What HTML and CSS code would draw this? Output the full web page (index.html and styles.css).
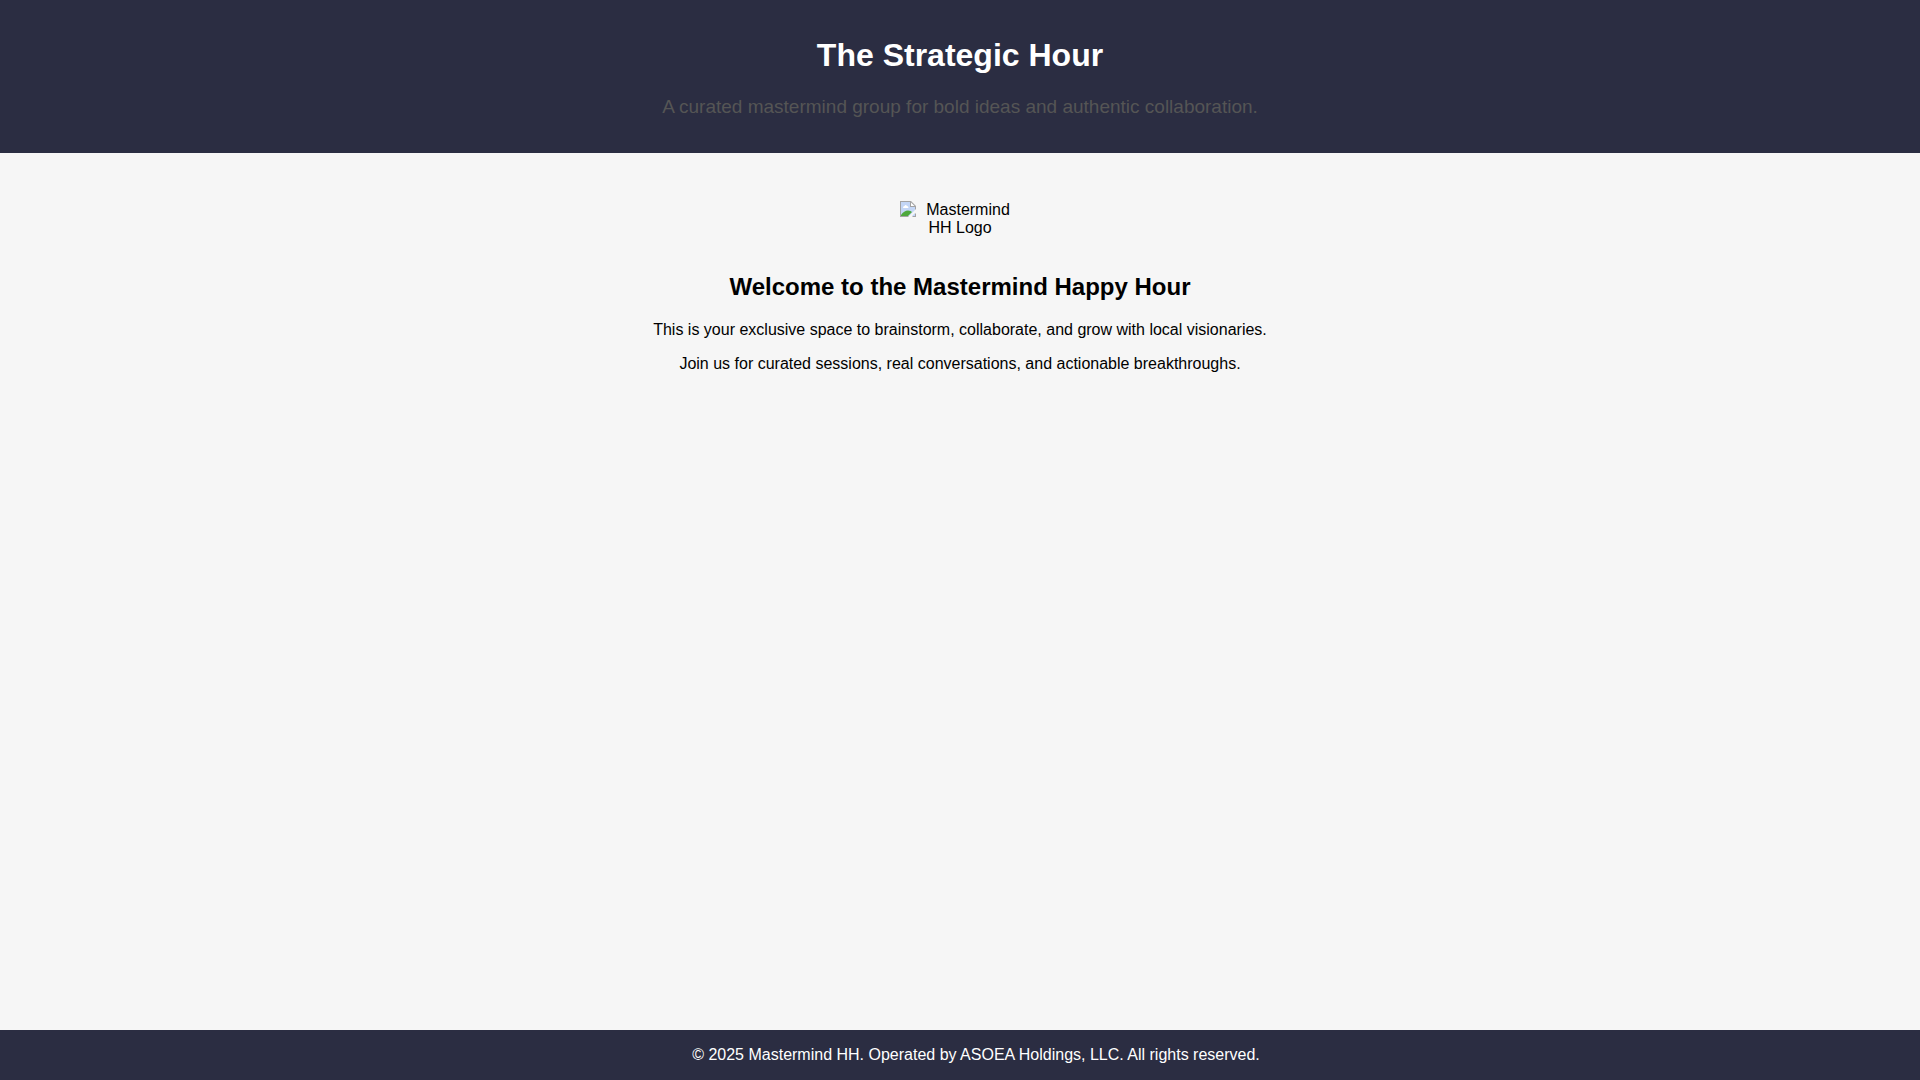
FILE: index.html
```html
<!DOCTYPE html>
<html lang="en">
<head>
<meta charset="utf-8">
<title>The Strategic Hour</title>
<link rel="stylesheet" href="styles.css">
</head>
<body class="page">
<header class="site-header">
<h1 class="site-title">The Strategic Hour</h1>
<p class="tagline">A curated mastermind group for bold ideas and authentic collaboration.</p>
</header>
<main class="content">
<div class="logo">
<svg class="logo-icon" width="16" height="16" viewBox="0 0 16 16" aria-hidden="true">
<path d="M0 0H11L16 5V16H0Z" fill="#a3a3a3"/>
<path d="M1 1H10V6H15V15H1Z" fill="#c3d6f6"/>
<path d="M11 1.500V5H14.500Z" fill="#fff"/>
<path d="M3 7Q3 5 4.500 5Q5.500 3 7 5Q8.500 5 8.500 7Z" fill="#fff"/>
<path d="M1 15V14Q4 9.500 8 9.500Q11 9.500 12 11L8 15Z" fill="#4ea83c"/>
<path d="M8 16L16 8V12L12 16Z" fill="#f6f6f6"/>
<path d="M12 15L15 12V15Z" fill="#c3d6f6"/>
</svg>
Mastermind HH Logo
</div>
<h2 class="welcome">Welcome to the Mastermind Happy Hour</h2>
<p class="copy">This is your exclusive space to brainstorm, collaborate, and grow with local visionaries.</p>
<p class="copy">Join us for curated sessions, real conversations, and actionable breakthroughs.</p>
</main>
<footer class="site-footer">© 2025 Mastermind HH. Operated by ASOEA Holdings, LLC. All rights reserved.</footer>
</body>
</html>
```

FILE: styles.css
```css
.page {
  margin: 0;
  min-height: 100vh;
  display: flex;
  flex-direction: column;
  background: #f6f6f6;
  color: #000;
  font-family: "Liberation Sans", Arial, sans-serif;
  font-size: 16px;
  text-align: center;
}

.site-header {
  padding: 16px;
  background: #2b2d42;
  color: #fff;
}

.site-title {
  margin: 21px 0 22px;
  font-size: 32px;
}

.tagline {
  margin: 0 0 19px;
  color: #555;
  font-size: 19px;
}

.content {
  flex: 1;
  padding: 48px 32px;
}

.logo {
  width: 120px;
  margin: 0 auto 36px;
}

.logo-icon {
  float: left;
}

.welcome {
  margin: 0 0 20px;
  font-size: 24px;
}

.copy {
  margin: 16px 0;
}

.site-footer {
  padding: 16px 0 16px 32px;
  background: #2b2d42;
  color: #fff;
}
```
